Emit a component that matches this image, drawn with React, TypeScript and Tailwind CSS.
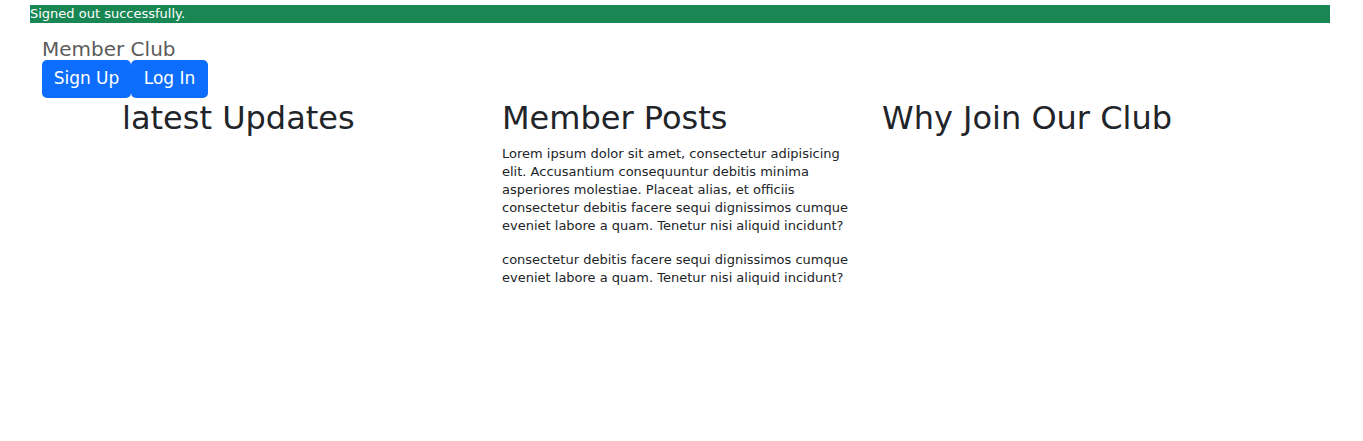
const App = () => {
  const columns = [
    { title: 'latest Updates', paragraphs: [] as string[] },
    {
      title: 'Member Posts',
      paragraphs: [
        'Lorem ipsum dolor sit amet, consectetur adipisicing elit. Accusantium consequuntur debitis minima asperiores molestiae. Placeat alias, et officiis consectetur debitis facere sequi dignissimos cumque eveniet labore a quam. Tenetur nisi aliquid incidunt?',
        'consectetur debitis facere sequi dignissimos cumque eveniet labore a quam. Tenetur nisi aliquid incidunt?',
      ],
    },
    { title: 'Why Join Our Club', paragraphs: [] as string[] },
  ];

  return (
    <div className="min-h-[441px] bg-white text-[#212529] font-['DejaVu_Sans',sans-serif]">
      <div className="pl-[30px] pr-[33px] pt-[5px]">
        <div className="h-[18px] bg-[#198754] text-white text-[13px] leading-[18px]">
          Signed out successfully.
        </div>
      </div>
      <header className="px-[42px] pt-[14px]">
        <div className="text-[20px] leading-[24px] text-[#5c5c5c] h-[23px]">Member Club</div>
        <div className="flex">
          <button className="h-[38px] w-[89px] bg-[#0d6efd] text-white text-[17px] rounded-[5px]">Sign Up</button>
          <button className="h-[38px] w-[77px] bg-[#0d6efd] text-white text-[17px] rounded-[5px]">Log In</button>
        </div>
      </header>
      <main className="pl-[110px] pt-[1px] grid grid-cols-[380px_380px_380px]">
        {columns.map((col, i) => (
          <div key={i} className="px-[12px]">
            <h2 className="text-[32px] leading-[38px] mb-[8px]">{col.title}</h2>
            {col.paragraphs.map((p, j) => (
              <p key={j} className="text-[13px] leading-[18px] mb-[16px] pr-[6px]">{p}</p>
            ))}
          </div>
        ))}
      </main>
    </div>
  );
};
export default App;
